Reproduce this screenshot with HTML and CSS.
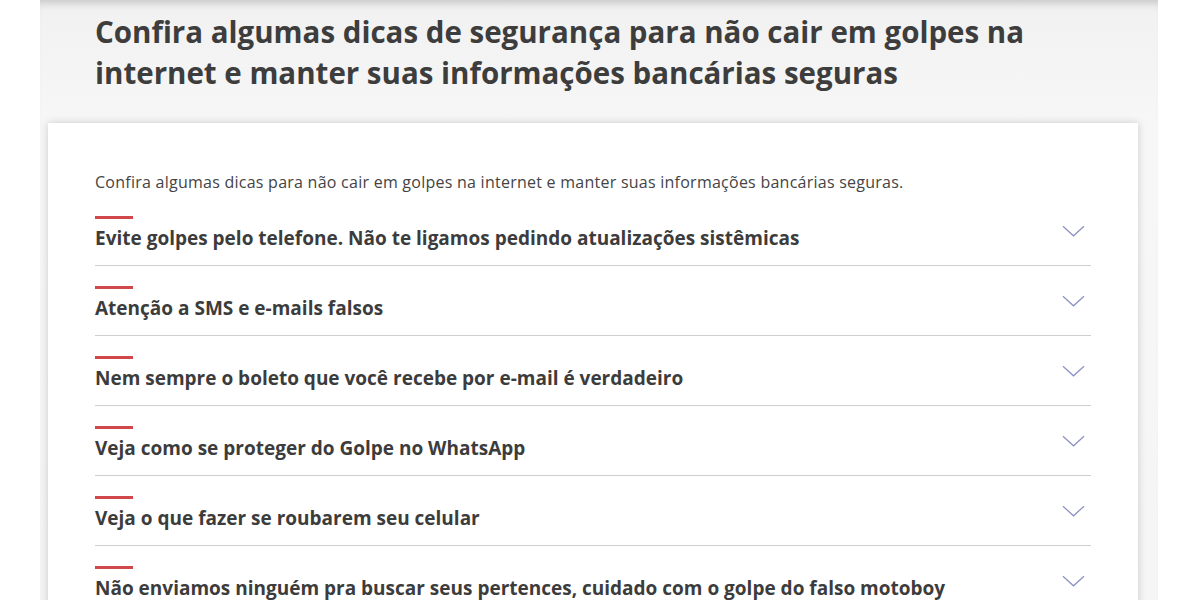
FILE: index.html
```html
<!DOCTYPE html>
<html lang="pt-BR">
<head>
<meta charset="utf-8">
<title>Dicas de segurança</title>
<link rel="stylesheet" href="styles.css">
</head>
<body>
<div class="panel">
  <h1 class="heading">Confira algumas dicas de segurança para não cair em golpes na internet e manter suas informações bancárias seguras</h1>
  <div class="card">
    <p class="intro">Confira algumas dicas para não cair em golpes na internet e manter suas informações bancárias seguras.</p>
    <ul class="list">
      <li class="item"><span class="bar"></span><div class="line"><span class="title">Evite golpes pelo telefone. Não te ligamos pedindo atualizações sistêmicas</span><svg class="chev" viewBox="0 0 24 12"><path d="M1 1 L12 11 L23 1"/></svg></div></li>
      <li class="item"><span class="bar"></span><div class="line"><span class="title">Atenção a SMS e e-mails falsos</span><svg class="chev" viewBox="0 0 24 12"><path d="M1 1 L12 11 L23 1"/></svg></div></li>
      <li class="item"><span class="bar"></span><div class="line"><span class="title">Nem sempre o boleto que você recebe por e-mail é verdadeiro</span><svg class="chev" viewBox="0 0 24 12"><path d="M1 1 L12 11 L23 1"/></svg></div></li>
      <li class="item"><span class="bar"></span><div class="line"><span class="title">Veja como se proteger do Golpe no WhatsApp</span><svg class="chev" viewBox="0 0 24 12"><path d="M1 1 L12 11 L23 1"/></svg></div></li>
      <li class="item"><span class="bar"></span><div class="line"><span class="title">Veja o que fazer se roubarem seu celular</span><svg class="chev" viewBox="0 0 24 12"><path d="M1 1 L12 11 L23 1"/></svg></div></li>
      <li class="item"><span class="bar"></span><div class="line"><span class="title">Não enviamos ninguém pra buscar seus pertences, cuidado com o golpe do falso motoboy</span><svg class="chev" viewBox="0 0 24 12"><path d="M1 1 L12 11 L23 1"/></svg></div></li>
    </ul>
  </div>
</div>
</body>
</html>
```
FILE: styles.css
```css
html, body {
  margin: 0;
  padding: 0;
  background: #ffffff;
  font-family: "Open Sans", "Noto Sans", sans-serif;
  color: #3d3d3d;
}
.panel {
  margin-left: 40px;
  width: 1118px;
  height: 600px;
  overflow: hidden;
  background: linear-gradient(#f1f1f1, #f7f7f7 130px, #f5f5f5);
  box-shadow: inset 0 9px 8px -6px rgba(0,0,0,0.18);
}
.heading {
  margin: 0;
  padding: 11px 0 0 55px;
  font-size: 29.5px;
  line-height: 41px;
  font-weight: 700;
  color: #3d3d3d;
  width: 1000px;
}
.card {
  margin: 30px 0 0 8px;
  width: 1090px;
  box-sizing: border-box;
  padding: 49px 47px 0 47px;
  background: #ffffff;
  box-shadow: 0 0 8px rgba(0,0,0,0.18);
  min-height: 500px;
}
.intro {
  margin: 0 0 4px 0;
  font-size: 16px;
  line-height: 20px;
  letter-spacing: 0.25px;
  color: #444444;
}
.list {
  list-style: none;
  margin: 0;
  padding: 0;
}
.item {
  padding: 20px 0 14px;
  border-bottom: 1px solid #cfcfcf;
}
.bar {
  display: block;
  width: 38px;
  height: 3px;
  background: #d0484b;
}
.line {
  display: flex;
  align-items: flex-start;
  justify-content: space-between;
  margin-top: 6px;
}
.title {
  font-size: 19px;
  line-height: 26px;
  font-weight: 700;
  color: #3c3c3c;
}
.chev {
  width: 23px;
  height: 12px;
  margin-right: 6px;
  fill: none;
  stroke: #8c91c4;
  stroke-width: 1.3;
}
```
